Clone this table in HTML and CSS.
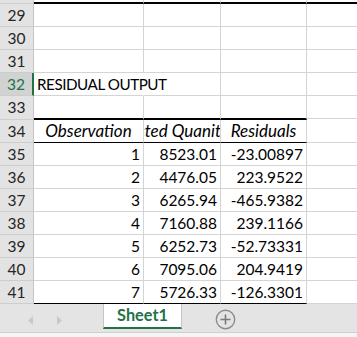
FILE: index.html
```html
<!DOCTYPE html>
<html>
<head>
<meta charset="utf-8">
<link rel="stylesheet" href="styles.css">
</head>
<body>
<div class="sheet">
  <div class="row top">
    <div class="c h"></div><div class="c a"></div><div class="c b"></div><div class="c cc"></div><div class="c d"></div>
  </div>
  <div class="row"><div class="c h">29</div><div class="c a"></div><div class="c b"></div><div class="c cc"></div><div class="c d"></div></div>
  <div class="row"><div class="c h">30</div><div class="c a"></div><div class="c b"></div><div class="c cc"></div><div class="c d"></div></div>
  <div class="row"><div class="c h">31</div><div class="c a"></div><div class="c b"></div><div class="c cc"></div><div class="c d"></div></div>
  <div class="row"><div class="c h sel">32</div><div class="c a over">RESIDUAL OUTPUT</div><div class="c b"></div><div class="c cc"></div><div class="c d"></div></div>
  <div class="row thick"><div class="c h">33</div><div class="c a"></div><div class="c b"></div><div class="c cc"></div><div class="c d"></div></div>
  <div class="row head"><div class="c h">34</div><div class="c a hd">Observation</div><div class="c b hd"><span>Predicted Quanity Sold</span></div><div class="c cc hd">Residuals</div><div class="c d"></div></div>
  <div class="row"><div class="c h">35</div><div class="c a num">1</div><div class="c b num">8523.01</div><div class="c cc num">-23.00897</div><div class="c d"></div></div>
  <div class="row"><div class="c h">36</div><div class="c a num">2</div><div class="c b num">4476.05</div><div class="c cc num">223.9522</div><div class="c d"></div></div>
  <div class="row"><div class="c h">37</div><div class="c a num">3</div><div class="c b num">6265.94</div><div class="c cc num">-465.9382</div><div class="c d"></div></div>
  <div class="row"><div class="c h">38</div><div class="c a num">4</div><div class="c b num">7160.88</div><div class="c cc num">239.1166</div><div class="c d"></div></div>
  <div class="row"><div class="c h">39</div><div class="c a num">5</div><div class="c b num">6252.73</div><div class="c cc num">-52.73331</div><div class="c d"></div></div>
  <div class="row"><div class="c h">40</div><div class="c a num">6</div><div class="c b num">7095.06</div><div class="c cc num">204.9419</div><div class="c d"></div></div>
  <div class="row last"><div class="c h">41</div><div class="c a num">7</div><div class="c b num">5726.33</div><div class="c cc num">-126.3301</div><div class="c d"></div></div>
</div>
<div class="tabbar">
  <div class="nav">
    <svg class="arrow" width="6" height="9" viewBox="0 0 6 9"><polygon points="5,0 5,9 0,4.5" fill="#c9c9c9"/></svg>
    <svg class="arrow" width="6" height="9" viewBox="0 0 6 9"><polygon points="1,0 1,9 6,4.5" fill="#c9c9c9"/></svg>
  </div>
  <div class="tab">Sheet1</div>
  <div class="add">
    <svg width="21" height="21" viewBox="0 0 21 21"><circle cx="10.5" cy="10.5" r="9.2" fill="none" stroke="#8c8c8c" stroke-width="1.4"/><path d="M10.5 5.5V15.5M5.5 10.5H15.5" stroke="#7a7a7a" stroke-width="1.6"/></svg>
  </div>
</div>
<div class="foot"></div>
</body>
</html>
```
FILE: styles.css
```css
html, body {
  margin: 0;
  padding: 0;
  background: #ffffff;
  overflow: hidden;
}
body {
  width: 357px;
  height: 337px;
  font-family: Lato, "Liberation Sans", sans-serif;
  font-size: 15.5px;
  color: #000;
}
.sheet {
  display: flex;
  flex-direction: column;
}
.row {
  display: flex;
  height: 23px;
}
.c {
  box-sizing: border-box;
  height: 100%;
  border-right: 1px solid #d4d4d4;
  border-bottom: 1px solid #d4d4d4;
  line-height: 22px;
  white-space: nowrap;
  overflow: hidden;
}
.h {
  width: 34px;
  flex: none;
  background: #e3e3e3;
  border-right-color: #c4c4c4;
  border-bottom-color: #cdcdcd;
  text-align: center;
  color: #262626;
}
.h.sel {
  background: #d2d2d2;
  color: #217346;
  border-right: 2px solid #217346;
}
.a { width: 110px; flex: none; }
.b { width: 77px; flex: none; }
.cc { width: 86px; flex: none; }
.d { flex: 1; border-right: none; }
.over {
  overflow: visible;
  padding-left: 3px;
  position: relative;
  z-index: 1;
  border-right-color: #fff;
  font-size: 15.2px;
  letter-spacing: -0.45px;
}
.num {
  text-align: right;
  padding-right: 3px;
}
.hd {
  font-style: italic;
  text-align: center;
  font-size: 17px;
}
.b.hd {
  display: flex;
  justify-content: center;
}
.b.hd span { flex: none; }
.row.top { height: 4px; }
.row.top .c { line-height: 0; }
.row.top .a, .row.top .b, .row.top .cc, .row.top .d {
  border-bottom: 2px solid #000;
}
.row.thick { height: 24px; }
.row.thick .a, .row.thick .b, .row.thick .cc {
  border-bottom: 2px solid #000;
}
.row.thick .d { height: 23px; }
.row.head .a, .row.head .b, .row.head .cc,
.row.last .a, .row.last .b, .row.last .cc {
  border-bottom: 1px solid #000;
}
.tabbar {
  display: flex;
  align-items: flex-start;
  height: 28px;
  background: #e4e4e4;
  border-bottom: 1px solid #cfcfcf;
}
.nav {
  width: 103px;
  flex: none;
  display: flex;
  gap: 22px;
  padding: 12px 0 0 28px;
  box-sizing: border-box;
}
.arrow { display: block; }
.tab {
  box-sizing: border-box;
  width: 79px;
  height: 25px;
  background: #fff;
  border-left: 1px solid #c6c6c6;
  border-right: 1px solid #c6c6c6;
  border-bottom: 2px solid #217346;
  color: #217346;
  font-weight: bold;
  font-size: 16.3px;
  text-align: center;
  line-height: 22px;
}
.add {
  margin-left: 33px;
  padding-top: 5px;
}
.add svg { display: block; }
.foot {
  height: 4px;
  background: #f5f5f5;
}
```
